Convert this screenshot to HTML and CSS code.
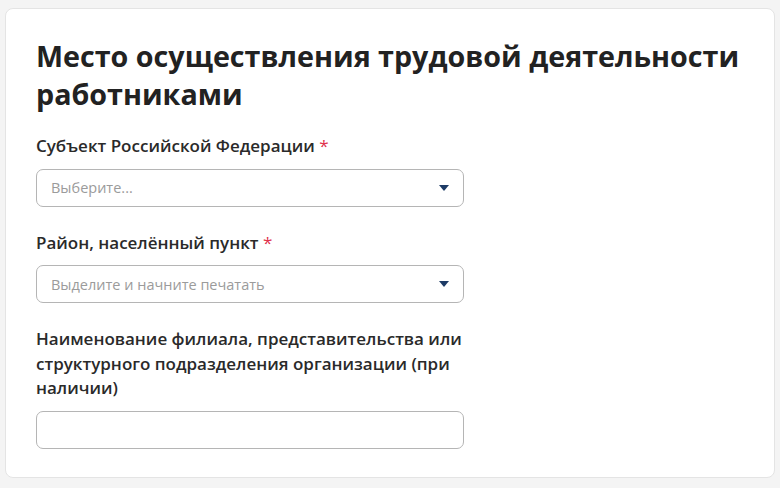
FILE: index.html
```html
<!DOCTYPE html>
<html lang="ru">
<head>
    <meta charset="UTF-8">
    <meta name="viewport" content="width=device-width, initial-scale=1.0">
    <title>Место осуществления трудовой деятельности</title>
    <link rel="stylesheet" href="styles.css">
</head>
<body>
    <div class="card">
        <h2 class="card-title">Место осуществления трудовой деятельности работниками</h2>

        <div class="field">
            <label class="field-label">Субъект Российской Федерации <span class="req">*</span></label>
            <div class="select">
                <span class="placeholder">Выберите...</span>
                <svg class="arrow" width="10" height="6" viewBox="0 0 10 6"><path d="M0 0h10L5 6z"/></svg>
            </div>
        </div>

        <div class="field">
            <label class="field-label">Район, населённый пункт <span class="req">*</span></label>
            <div class="select">
                <span class="placeholder">Выделите и начните печатать</span>
                <svg class="arrow" width="10" height="6" viewBox="0 0 10 6"><path d="M0 0h10L5 6z"/></svg>
            </div>
        </div>

        <div class="field">
            <label class="field-label">Наименование филиала, представительства или структурного подразделения организации (при наличии)</label>
            <input type="text" class="input">
        </div>
    </div>
</body>
</html>
```

FILE: styles.css
```css
body {
    margin: 0;
    padding: 8px 5px 9px;
    background-color: #f4f4f4;
    font-family: "Open Sans", Arial, sans-serif;
    color: #1f1f1f;
}
.card {
    background-color: #fff;
    border: 1px solid #e4e4e4;
    border-radius: 8px;
    padding: 28px 30px 28px;
    height: 470px;
    box-sizing: border-box;
}
.card-title {
    margin: 0 0 21px;
    font-size: 28.7px;
    line-height: 38px;
    font-weight: 700;
    color: #222;
}
.field {
    width: 428px;
    margin-bottom: 24px;
}
.field-label {
    display: block;
    font-size: 17px;
    line-height: 24.5px;
    font-weight: 600;
    color: #2a2a2a;
    margin-bottom: 10px;
}
.req {
    color: #e0314b;
    font-weight: 400;
}
.select,
.input {
    display: flex;
    align-items: center;
    width: 100%;
    height: 38px;
    box-sizing: border-box;
    border: 1px solid #b5b5b5;
    border-radius: 7px;
    padding: 0 14px;
    background: #fff;
}
.placeholder {
    flex: 1;
    font-size: 14.5px;
    color: #9b9b9b;
}
.arrow {
    fill: #1d3b66;
}
.input {
    display: block;
    font: inherit;
}
```
